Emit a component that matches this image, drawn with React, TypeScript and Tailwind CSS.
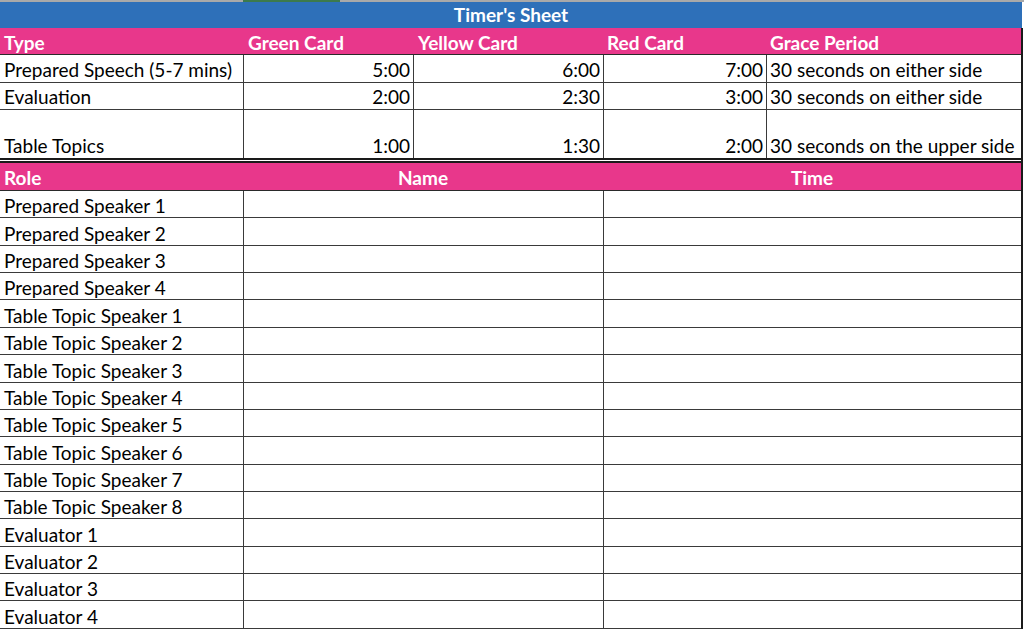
import React from "react";

const topRows = [
  { type: "Prepared Speech (5-7 mins)", g: "5:00", y: "6:00", r: "7:00", grace: "30 seconds on either side", h: "h-[28px]", b: "border-b border-[#3a3a3a]" },
  { type: "Evaluation", g: "2:00", y: "2:30", r: "3:00", grace: "30 seconds on either side", h: "h-[27px]", b: "border-b border-[#3a3a3a]" },
  { type: "Table Topics", g: "1:00", y: "1:30", r: "2:00", grace: "30 seconds on the upper side", h: "h-[53px]", b: "border-b-[5px] border-double border-[#1a1a1a]" },
];

const roles = [
  { n: "Prepared Speaker 1", h: "h-[27px]" },
  { n: "Prepared Speaker 2", h: "h-[28px]" },
  { n: "Prepared Speaker 3", h: "h-[27px]" },
  { n: "Prepared Speaker 4", h: "h-[27px]" },
  { n: "Table Topic Speaker 1", h: "h-[28px]" },
  { n: "Table Topic Speaker 2", h: "h-[27px]" },
  { n: "Table Topic Speaker 3", h: "h-[28px]" },
  { n: "Table Topic Speaker 4", h: "h-[27px]" },
  { n: "Table Topic Speaker 5", h: "h-[27px]" },
  { n: "Table Topic Speaker 6", h: "h-[28px]" },
  { n: "Table Topic Speaker 7", h: "h-[27px]" },
  { n: "Table Topic Speaker 8", h: "h-[27px]" },
  { n: "Evaluator 1", h: "h-[28px]" },
  { n: "Evaluator 2", h: "h-[27px]" },
  { n: "Evaluator 3", h: "h-[27px]" },
  { n: "Evaluator 4", h: "h-[28px]" },
];

export default function App() {
  return (
    <div
      className="w-[1024px] h-[630px] overflow-hidden bg-white text-black text-[19px] leading-none"
      style={{ fontFamily: "Lato, 'Liberation Sans', sans-serif" }}
    >
      {/* top strip */}
      <div className="flex h-[2px]">
        <div className="w-[243px] bg-[#a9a9a9]" />
        <div className="w-[97px] bg-[#3c7a4c]" />
        <div className="flex-1 bg-[#a9a9a9]" />
      </div>
      {/* title */}
      <div className="w-[1022px] h-[26px] bg-[#2e70b9] flex items-end justify-center text-white font-bold pb-[4px]">
        Timer's Sheet
      </div>
      <div className="w-[1023px] border-r-2 border-[#1a1a1a]">
        {/* header */}
        <div className="grid grid-cols-[243px_170px_190px_163px_255px] h-[27px] bg-[#e8378b] text-white font-bold border-b border-[#2a2a2a]">
          <div className="flex items-end pb-[2px] pl-[4px]">Type</div>
          <div className="flex items-end pb-[2px] pl-[5px]">Green Card</div>
          <div className="flex items-end pb-[2px] pl-[5px]">Yellow Card</div>
          <div className="flex items-end pb-[2px] pl-[4px]">Red Card</div>
          <div className="flex items-end pb-[2px] pl-[4px]">Grace Period</div>
        </div>
        {topRows.map((r) => (
          <div key={r.type} className={`grid grid-cols-[243px_170px_190px_163px_255px] ${r.h} ${r.b}`}>
            <div className="flex items-end pb-[3px] pl-[4px]">{r.type}</div>
            <div className="flex items-end justify-end pb-[3px] pr-[3px] border-l border-[#3a3a3a]">{r.g}</div>
            <div className="flex items-end justify-end pb-[3px] pr-[3px] border-l border-[#3a3a3a]">{r.y}</div>
            <div className="flex items-end justify-end pb-[3px] pr-[3px] border-l border-[#3a3a3a]">{r.r}</div>
            <div className="flex items-end pb-[3px] pl-[3px] border-l border-[#3a3a3a]">{r.grace}</div>
          </div>
        ))}
        {/* role header */}
        <div className="grid grid-cols-[243px_360px_418px] h-[28px] bg-[#e8378b] text-white font-bold border-b border-[#2a2a2a]">
          <div className="flex items-end pb-[3px] pl-[4px]">Role</div>
          <div className="flex items-end justify-center pb-[3px]">Name</div>
          <div className="flex items-end justify-center pb-[3px]">Time</div>
        </div>
        {roles.map((r) => (
          <div key={r.n} className={`grid grid-cols-[243px_360px_418px] ${r.h} border-b border-[#3a3a3a]`}>
            <div className="flex items-end pb-[2px] pl-[4px]">{r.n}</div>
            <div className="border-l border-[#3a3a3a]" />
            <div className="border-l border-[#3a3a3a]" />
          </div>
        ))}
      </div>
    </div>
  );
}
